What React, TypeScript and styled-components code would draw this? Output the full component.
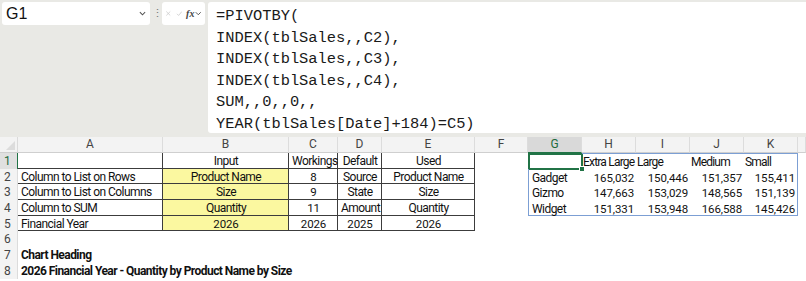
import styled, { createGlobalStyle } from 'styled-components';

const GlobalStyle = createGlobalStyle`
  html, body {
    margin: 0;
    padding: 0;
    background: #ffffff;
  }
  body {
    font-family: Roboto, "Liberation Sans", sans-serif;
    overflow: hidden;
  }
`;

const columns = [
  { key: 'A', width: 145 },
  { key: 'B', width: 126 },
  { key: 'C', width: 49 },
  { key: 'D', width: 44 },
  { key: 'E', width: 93 },
  { key: 'F', width: 53 },
  { key: 'G', width: 54 },
  { key: 'H', width: 54 },
  { key: 'I', width: 54 },
  { key: 'J', width: 54 },
  { key: 'K', width: 54 },
  { key: '', width: 8 },
];

const formulaLines = [
  '=PIVOTBY(',
  'INDEX(tblSales,,C2),',
  'INDEX(tblSales,,C3),',
  'INDEX(tblSales,,C4),',
  'SUM,,0,,0,,',
  'YEAR(tblSales[Date]+184)=C5)',
];

type Align = 'left' | 'center' | 'right';

interface CellDef {
  text?: string;
  align?: Align;
  boxed?: boolean;
  yellow?: boolean;
  bold?: boolean;
  numeric?: boolean;
  tight?: boolean;
}

const inputRows: [string, string, string, string, string][] = [
  ['', 'Input', 'Workings', 'Default', 'Used'],
  ['Column to List on Rows', 'Product Name', '8', 'Source', 'Product Name'],
  ['Column to List on Columns', 'Size', '9', 'State', 'Size'],
  ['Column to SUM', 'Quantity', '11', 'Amount', 'Quantity'],
  ['Financial Year', '2026', '2026', '2025', '2026'],
];

const pivotRows: string[][] = [
  ['', 'Extra Large', 'Large', 'Medium', 'Small'],
  ['Gadget', '165,032', '150,446', '151,357', '155,411'],
  ['Gizmo', '147,663', '153,029', '148,565', '151,139'],
  ['Widget', '151,331', '153,948', '166,588', '145,426'],
];

const buildRow = (r: number): CellDef[] => {
  const cells: CellDef[] = [];
  if (r < 5) {
    const row = inputRows[r];
    row.forEach((text, i) => {
      cells.push({
        text,
        align: i === 0 ? 'left' : 'center',
        boxed: true,
        yellow: i === 1 && r > 0,
        numeric: /^\d+$/.test(text),
      });
    });
  } else {
    for (let i = 0; i < 5; i++) cells.push({});
    if (r === 6) cells[0] = { text: 'Chart Heading', bold: true, align: 'left' };
    if (r === 7)
      cells[0] = {
        text: '2026 Financial Year - Quantity by Product Name by Size',
        bold: true,
        align: 'left',
      };
  }
  cells.push({});
  if (r < 4) {
    pivotRows[r].forEach((text, i) => {
      const isNum = r > 0 && i > 0;
      cells.push({
        text,
        align: isNum ? 'right' : 'left',
        numeric: isNum,
        tight: r === 0,
      });
    });
  } else {
    for (let i = 0; i < 5; i++) cells.push({});
  }
  cells.push({});
  return cells;
};

const App = () => {
  const rows = Array.from({ length: 8 }, (_, r) => buildRow(r));

  return (
    <>
      <GlobalStyle />
      <Window>
        <FormulaBar>
          <LeftTools>
            <NameBox>
              <NameText>G1</NameText>
              <Chevron viewBox="0 0 8 5">
                <path d="M1 1 L4 4 L7 1" />
              </Chevron>
            </NameBox>
            <Dots>⋮</Dots>
            <FxBox>
              <ToolIcon viewBox="0 0 10 10">
                <path d="M2 2 L8 8 M8 2 L2 8" />
              </ToolIcon>
              <ToolIcon viewBox="0 0 10 10">
                <path d="M1.5 5.5 L4 8 L9 2" />
              </ToolIcon>
              <FxText>fx</FxText>
              <Chevron viewBox="0 0 8 5">
                <path d="M1 1 L4 4 L7 1" />
              </Chevron>
            </FxBox>
          </LeftTools>
          <FormulaBox>
            {formulaLines.map((line) => (
              <FormulaLine key={line}>{line}</FormulaLine>
            ))}
          </FormulaBox>
        </FormulaBar>

        <Sheet>
          <Corner>
            <CornerTri viewBox="0 0 10 10">
              <path d="M10 0 L10 10 L0 10 Z" />
            </CornerTri>
          </Corner>
          {columns.map((c) => (
            <ColHeader key={c.key || 'edge'} selected={c.key === 'G'}>
              {c.key}
            </ColHeader>
          ))}

          {rows.map((cells, r) => (
            <Row key={r}>
              <RowHeader selected={r === 0}>{r + 1}</RowHeader>
              {cells.map((cell, i) => (
                <Cell
                  key={i}
                  align={cell.align ?? 'left'}
                  boxed={!!cell.boxed}
                  yellow={!!cell.yellow}
                  bold={!!cell.bold}
                  numeric={!!cell.numeric}
                  tight={!!cell.tight}
                  spill={i >= 6 && i <= 10 && r < 4}
                  spillTop={r === 0}
                  spillBottom={r === 3}
                  spillLeft={i === 6}
                  spillRight={i === 10}
                >
                  {cell.text}
                  {i === 6 && r === 0 && <ActiveCell />}
                </Cell>
              ))}
            </Row>
          ))}
        </Sheet>
      </Window>
    </>
  );
};

const Window = styled.div`
  width: 806px;
  height: 281px;
  background: #e9e9e5;
  display: flex;
  flex-direction: column;
  overflow: hidden;
`;

const FormulaBar = styled.div`
  display: flex;
  gap: 3px;
  padding: 2px 0 0 2px;
  height: 135px;
  box-sizing: border-box;
`;

const LeftTools = styled.div`
  display: flex;
  align-items: flex-start;
  gap: 2px;
`;

const NameBox = styled.div`
  width: 148px;
  height: 23px;
  box-sizing: border-box;
  background: #ffffff;
  border-radius: 3px;
  display: flex;
  align-items: center;
  justify-content: space-between;
  padding: 0 4px 0 4px;
`;

const NameText = styled.span`
  font-family: "Liberation Sans", Arial, sans-serif;
  font-size: 16px;
  color: #111;
`;

const Chevron = styled.svg`
  width: 7px;
  height: 5px;
  fill: none;
  stroke: #555;
  stroke-width: 1.2;
`;

const Dots = styled.span`
  width: 8px;
  font-size: 11px;
  line-height: 23px;
  color: #777;
  text-align: center;
`;

const FxBox = styled.div`
  width: 43px;
  height: 23px;
  box-sizing: border-box;
  background: #ffffff;
  border-radius: 3px;
  display: flex;
  align-items: center;
  gap: 4px;
  padding: 0 3px 0 3px;
`;

const ToolIcon = styled.svg`
  width: 7px;
  height: 7px;
  fill: none;
  stroke: #c6c6c6;
  stroke-width: 1.1;
`;

const FxText = styled.span`
  font-family: "Liberation Serif", serif;
  font-style: italic;
  font-weight: bold;
  font-size: 10px;
  color: #444;
  margin-right: -3px;
`;

const FormulaBox = styled.div`
  flex: 1;
  height: 131px;
  box-sizing: border-box;
  background: #ffffff;
  border-radius: 3px 0 0 3px;
  padding: 4px 0 0 8px;
  display: flex;
  flex-direction: column;
`;

const FormulaLine = styled.div`
  font-family: "Liberation Mono", "DejaVu Sans Mono", monospace;
  font-size: 15.4px;
  line-height: 21.5px;
  height: 21.5px;
  color: #1a1a1a;
  white-space: pre;
`;

const Sheet = styled.div`
  margin-top: 2px;
  display: grid;
  grid-template-columns: 18px ${columns.map((c) => `${c.width}px`).join(' ')};
  grid-template-rows: 16px;
  grid-auto-rows: 15.7px;
  flex: 1;
  align-content: start;
  background: #ffffff;
  font-family: Roboto, "Liberation Sans", sans-serif;
  font-size: 12px;
  letter-spacing: -0.55px;
  color: #111;
`;

const Corner = styled.div`
  background: #f3f3f3;
  border-bottom: 1px solid #cfcfcf;
  border-right: 1px solid #dadada;
  display: flex;
  align-items: flex-end;
  justify-content: flex-end;
  padding: 0 2px 2px 0;
`;

const CornerTri = styled.svg`
  width: 9px;
  height: 9px;
  fill: #dcdcdc;
`;

const ColHeader = styled.div<{ selected: boolean }>`
  background: ${(p) => (p.selected ? '#d9d9d9' : '#f3f3f3')};
  border-bottom: 1px solid ${(p) => (p.selected ? '#217346' : '#cfcfcf')};
  border-right: 1px solid #dcdcdc;
  color: ${(p) => (p.selected ? '#1e6b3d' : '#444')};
  font-size: 12px;
  letter-spacing: 0;
  line-height: 15px;
  text-align: center;
`;

const Row = styled.div`
  display: contents;
`;

const RowHeader = styled.div<{ selected: boolean }>`
  background: ${(p) => (p.selected ? '#e0e0e0' : '#f3f3f3')};
  border-right: 1px solid ${(p) => (p.selected ? '#217346' : '#dcdcdc')};
  color: ${(p) => (p.selected ? '#1e6b3d' : '#444')};
  font-size: 12px;
  letter-spacing: 0;
  line-height: 16px;
  padding-left: 4px;
`;

const Cell = styled.div<{
  align: Align;
  boxed: boolean;
  yellow: boolean;
  bold: boolean;
  numeric: boolean;
  tight: boolean;
  spill: boolean;
  spillTop: boolean;
  spillBottom: boolean;
  spillLeft: boolean;
  spillRight: boolean;
}>`
  position: relative;
  box-sizing: border-box;
  background: ${(p) => (p.yellow ? '#fbf8a0' : 'transparent')};
  text-align: ${(p) => p.align};
  font-weight: ${(p) => (p.bold ? 700 : 400)};
  letter-spacing: ${(p) => (p.numeric ? '-0.1px' : p.tight ? '-0.8px' : 'inherit')};
  font-size: ${(p) => (p.numeric ? '11.5px' : 'inherit')};
  line-height: 16px;
  padding: 0 2px 0 ${(p) => (p.tight ? 1 : 3)}px;
  white-space: nowrap;
  overflow: visible;
  z-index: ${(p) => (p.bold ? 2 : 1)};
  ${(p) =>
    p.boxed &&
    `
    border-right: 1px solid #3c3c3c;
    border-bottom: 1px solid #3c3c3c;
  `}
  ${(p) =>
    p.spill &&
    `
    border-top: ${p.spillTop ? '1px solid #7c9fd4' : 'none'};
    border-bottom: ${p.spillBottom ? '1px solid #7c9fd4' : 'none'};
    border-left: ${p.spillLeft ? '1px solid #7c9fd4' : 'none'};
    border-right: ${p.spillRight ? '1px solid #7c9fd4' : 'none'};
    padding-top: ${p.spillTop ? 0 : 1}px;
  `}
`;

const ActiveCell = styled.span`
  position: absolute;
  left: -1px;
  top: -1px;
  right: -1px;
  bottom: -1px;
  border: 2px solid #217346;
  &::after {
    content: '';
    position: absolute;
    right: -4px;
    bottom: -4px;
    width: 4px;
    height: 4px;
    background: #217346;
    border: 1px solid #fff;
  }
`;

export default App;
